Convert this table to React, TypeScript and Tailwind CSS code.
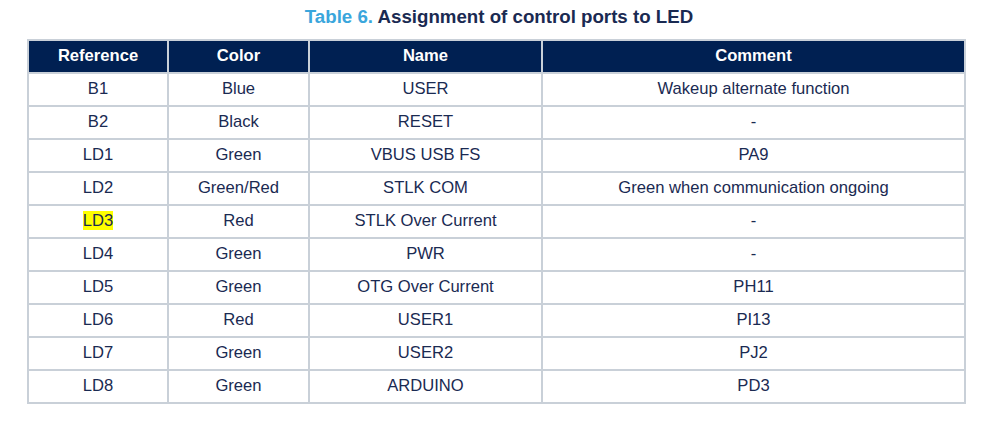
const rows: [string, string, string, string][] = [
  ["B1", "Blue", "USER", "Wakeup alternate function"],
  ["B2", "Black", "RESET", "-"],
  ["LD1", "Green", "VBUS USB FS", "PA9"],
  ["LD2", "Green/Red", "STLK COM", "Green when communication ongoing"],
  ["LD3", "Red", "STLK Over Current", "-"],
  ["LD4", "Green", "PWR", "-"],
  ["LD5", "Green", "OTG Over Current", "PH11"],
  ["LD6", "Red", "USER1", "PI13"],
  ["LD7", "Green", "USER2", "PJ2"],
  ["LD8", "Green", "ARDUINO", "PD3"],
];

const headers = ["Reference", "Color", "Name", "Comment"];

export default function App() {
  return (
    <div className="h-[434px] w-[998px] bg-white font-['Liberation_Sans',Arial,sans-serif] text-[#1a2a52]">
      <div className="pt-[5px] text-center text-[18.7px] leading-[24px] font-bold">
        <span className="text-[#3aa6dc]">Table 6.</span> <span>Assignment of control ports to LED</span>
      </div>
      <table className="mt-[10px] ml-[27px] w-[939px] table-fixed border-collapse border-2 border-[#c9d0d8] text-[16.6px]">
        <colgroup>
          <col className="w-[140px]" />
          <col className="w-[141px]" />
          <col className="w-[233px]" />
          <col />
        </colgroup>
        <thead>
          <tr className="h-[33px] bg-[#002052] text-white">
            {headers.map((h) => (
              <th key={h} className="border-2 border-[#c9d0d8] p-0 text-center font-bold">
                {h}
              </th>
            ))}
          </tr>
        </thead>
        <tbody>
          {rows.map((r) => (
            <tr key={r[0]} className="h-[33px]">
              {r.map((c, i) => (
                <td key={i} className="border-2 border-[#c9d0d8] p-0 text-center">
                  {r[0] === "LD3" && i === 0 ? <span className="bg-[#ffff00]">{c}</span> : c}
                </td>
              ))}
            </tr>
          ))}
        </tbody>
      </table>
    </div>
  );
}
